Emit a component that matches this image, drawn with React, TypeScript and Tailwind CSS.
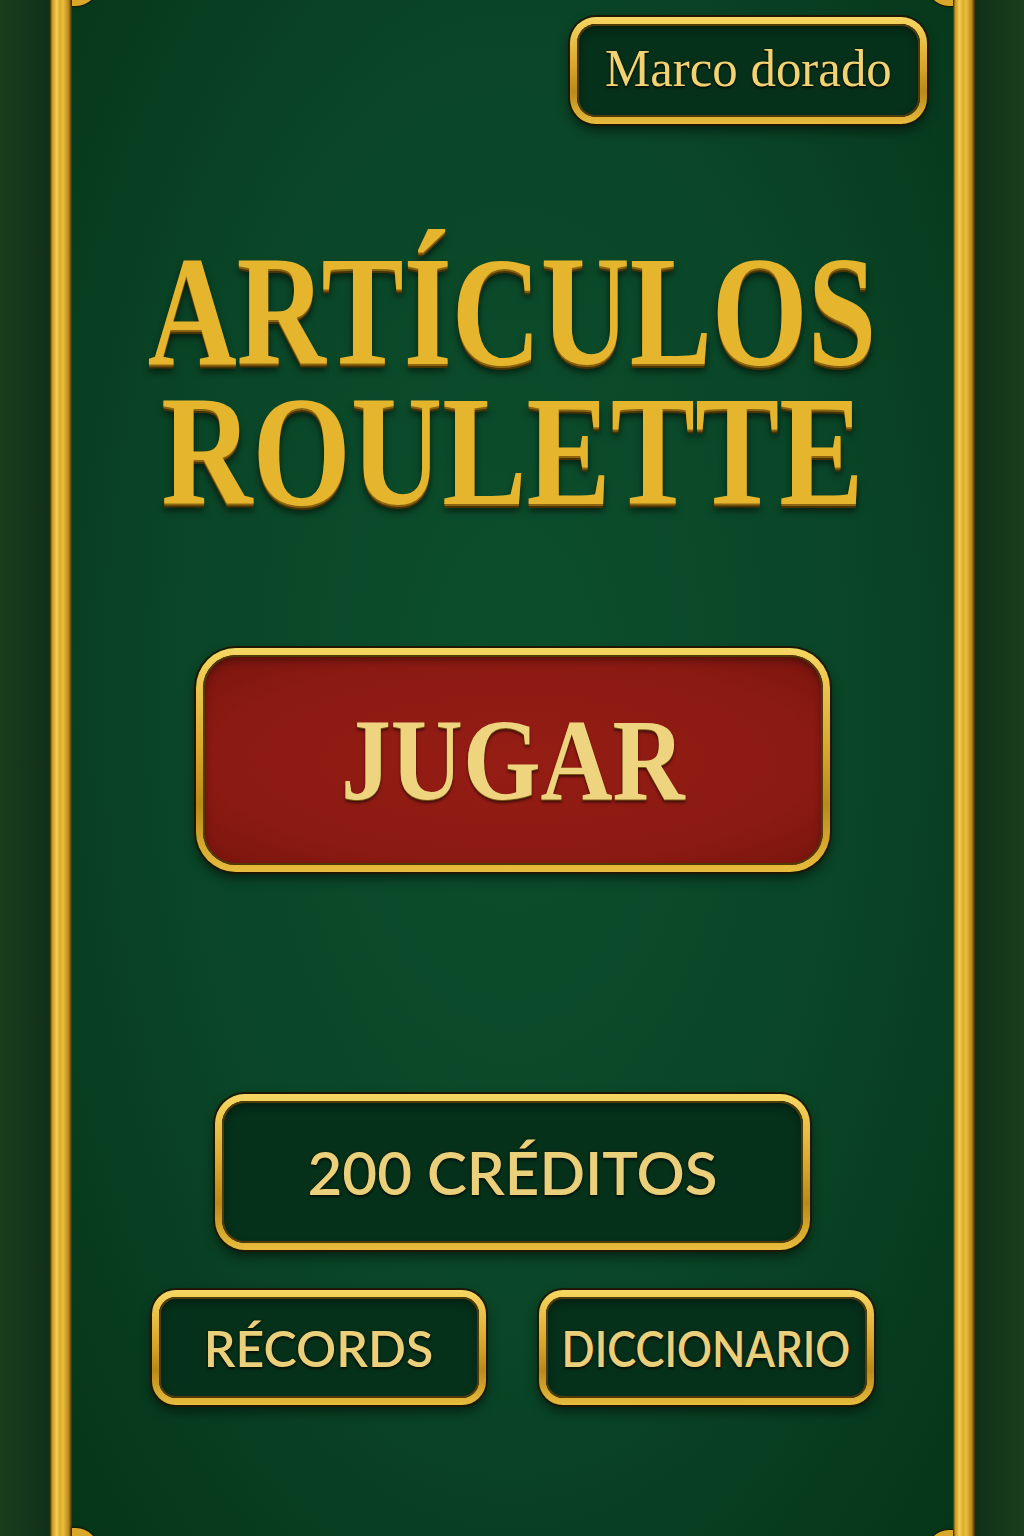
import React from "react";

const serif = "font-['Liberation_Serif','Times_New_Roman',serif]";
const sans = "font-['Lato','Open_Sans',sans-serif]";

const GoldBox = ({ className, inner, children }: { className: string; inner: string; children: React.ReactNode }) => (
  <div
    className={
      "shrink-0 p-[7px] bg-[linear-gradient(180deg,#f6d763_0%,#d9a72a_45%,#b98a18_70%,#e8bd3e_100%)] shadow-[0_0_0_2px_#1f1703,0_6px_12px_rgba(0,0,0,0.55)] " +
      className
    }
  >
    <div
      className={
        "w-full h-full flex items-center justify-center shadow-[inset_0_0_0_2px_#4f3a08,inset_0_4px_10px_rgba(0,0,0,0.45)] " +
        inner
      }
    >
      {children}
    </div>
  </div>
);

const GoldBar = () => (
  <div className="w-[22px] h-full shrink-0 bg-[linear-gradient(90deg,#3b2a05_0%,#c8961e_10%,#f3cf55_30%,#dcab2c_45%,#e9be3e_60%,#b8861a_85%,#3a2904_100%)]" />
);

const App = () => {
  return (
    <div className="w-[1024px] h-[1536px] flex bg-[#143818] overflow-hidden">
      {/* left margin */}
      <div className="w-[50px] h-full shrink-0 bg-[linear-gradient(90deg,#1a3d1c,#10311a)]" />
      <GoldBar />

      {/* main panel */}
      <div className="relative w-[881px] shrink-0 h-full flex flex-col items-center bg-[radial-gradient(ellipse_at_50%_45%,#0c4f2c_0%,#0a4527_55%,#063519_100%)]">
        {/* corner fillets */}
        <div className="absolute left-0 -top-[20px] w-[26px] h-[26px] rounded-br-[22px] bg-[#d9a82a] shadow-[0_1px_2px_#1a1200]" />
        <div className="absolute right-0 -top-[20px] w-[26px] h-[26px] rounded-bl-[22px] bg-[#d9a82a] shadow-[0_1px_2px_#1a1200]" />
        <div className="absolute left-0 -bottom-[20px] w-[26px] h-[28px] rounded-tr-[22px] bg-[#d9a82a] shadow-[0_-1px_2px_#1a1200]" />
        <div className="absolute right-0 -bottom-[20px] w-[26px] h-[26px] rounded-tl-[22px] bg-[#d9a82a] shadow-[0_-1px_2px_#1a1200]" />

        {/* frame label */}
        <div className="w-full flex justify-end pt-[17px] pr-[26px]">
          <GoldBox className="w-[357px] h-[107px] rounded-[26px]" inner="rounded-[19px] bg-[#05301a]">
            <span
              className={`${serif} text-[53px] leading-none text-[#f1d374] pb-[4px] scale-x-[0.96] whitespace-nowrap [text-shadow:0_0_2px_#1a1200,0_2px_2px_rgba(0,0,0,0.6)]`}
            >
              Marco dorado
            </span>
          </GoldBox>
        </div>

        {/* title */}
        <h1
          className={`${serif} mt-[128px] w-full flex flex-col items-center gap-[20px] font-bold text-[156px] leading-[120px] text-[#e5b52d] [text-shadow:0_2px_0_#8a6410,0_4px_0_#4a3304,0_7px_8px_rgba(0,0,0,0.6)]`}
        >
          <div className="whitespace-nowrap scale-x-[0.79]">ARTÍCULOS</div>
          <div className="whitespace-nowrap scale-x-[0.81]">ROULETTE</div>
        </h1>

        {/* play */}
        <GoldBox
          className="mt-[136px] w-[634px] h-[224px] rounded-[40px]"
          inner="rounded-[33px] bg-[radial-gradient(ellipse_at_center,#951d14_0%,#8a1a12_70%,#7a150e_100%)]"
        >
          <span
            className={`${serif} font-bold text-[116px] leading-none text-[#efd47f] scale-x-[0.86] [text-shadow:0_1px_0_#7a5a10,0_3px_3px_rgba(0,0,0,0.55)]`}
          >
            JUGAR
          </span>
        </GoldBox>

        {/* credits */}
        <GoldBox className="mt-[222px] w-[595px] h-[156px] rounded-[30px]" inner="rounded-[23px] bg-[#05301a]">
          <span
            className={`${sans} font-semibold text-[60px] leading-none text-[#ead07a] whitespace-nowrap [text-shadow:0_0_2px_#1a1200,0_2px_3px_rgba(0,0,0,0.6)]`}
          >
            200 CRÉDITOS
          </span>
        </GoldBox>

        {/* secondary buttons */}
        <div className="mt-[40px] flex gap-[53px]">
          <GoldBox className="w-[334px] h-[115px] rounded-[24px]" inner="rounded-[17px] bg-[#05301a]">
            <span
              className={`${sans} font-semibold text-[50px] leading-none text-[#ead07a] [text-shadow:0_0_2px_#1a1200,0_2px_3px_rgba(0,0,0,0.6)]`}
            >
              RÉCORDS
            </span>
          </GoldBox>
          <GoldBox className="w-[335px] h-[115px] rounded-[24px]" inner="rounded-[17px] bg-[#05301a]">
            <span
              className={`${sans} font-semibold text-[50px] leading-none text-[#ead07a] scale-x-[0.87] [text-shadow:0_0_2px_#1a1200,0_2px_3px_rgba(0,0,0,0.6)]`}
            >
              DICCIONARIO
            </span>
          </GoldBox>
        </div>
      </div>

      <GoldBar />
      {/* right margin */}
      <div className="w-[49px] h-full shrink-0 bg-[linear-gradient(90deg,#0f3118,#1a3e1c)]" />
    </div>
  );
};

export default App;
